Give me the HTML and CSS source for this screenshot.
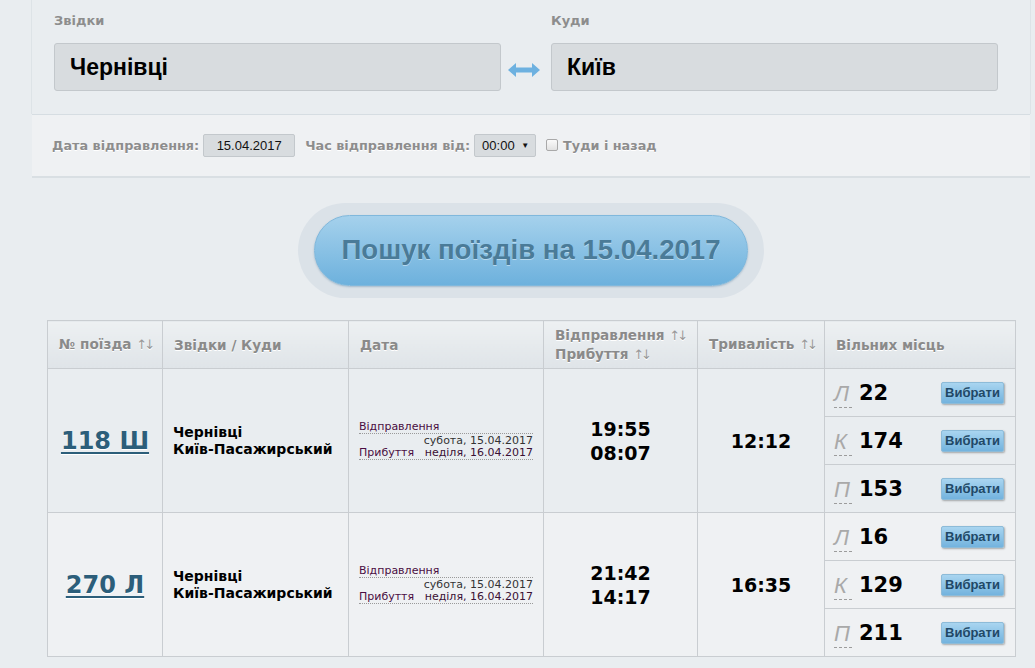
FILE: index.html
```html
<!DOCTYPE html>
<html lang="uk">
<head>
<meta charset="utf-8">
<title>Пошук поїздів</title>
<link rel="stylesheet" href="styles.css">
</head>
<body>
<div class="panel">
  <div class="route">
    <div class="field">
      <div class="label">Звідки</div>
      <div class="city-input">Чернівці</div>
    </div>
    <div class="swap">
      <svg width="32" height="14" viewBox="0 0 32 14"><path d="M0 7 L8 0 L8 4.5 L24 4.5 L24 0 L32 7 L24 14 L24 9.5 L8 9.5 L8 14 Z" fill="#6db1e0"/></svg>
    </div>
    <div class="field">
      <div class="label">Куди</div>
      <div class="city-input">Київ</div>
    </div>
  </div>
  <div class="date-row">
    <span class="dlabel">Дата відправлення:</span>
    <span class="date-box">15.04.2017</span>
    <span class="dlabel gap-l">Час відправлення від:</span>
    <span class="select-box">00:00 <span class="caret">▼</span></span>
    <span class="checkbox"></span>
    <span class="dlabel">Туди і назад</span>
  </div>
  <div class="search-wrap">
    <div class="search-ring">
      <div class="search-btn">Пошук поїздів на 15.04.2017</div>
    </div>
  </div>
  <table class="trains">
    <thead>
      <tr>
        <th class="c1">№ поїзда <span class="sort">↑↓</span></th>
        <th class="c2">Звідки / Куди</th>
        <th class="c3">Дата</th>
        <th class="c4">Відправлення <span class="sort">↑↓</span><br>Прибуття <span class="sort">↑↓</span></th>
        <th class="c5">Тривалість <span class="sort">↑↓</span></th>
        <th class="c6">Вільних місць</th>
      </tr>
    </thead>
    <tbody>
      <tr class="row-a">
        <td class="num"><a href="#">118 Ш</a></td>
        <td class="stations">Чернівці<br>Київ-Пасажирський</td>
        <td class="dates">
          <div class="dline"><span class="dl">Відправлення</span></div>
          <div class="dright">субота, 15.04.2017</div>
          <div class="dline"><span class="dl">Прибуття</span><span class="dd">неділя, 16.04.2017</span></div>
        </td>
        <td class="times">19:55<br>08:07</td>
        <td class="times">12:12</td>
        <td class="seats">
          <div class="seat"><span class="type">Л</span><span class="count">22</span><span class="pick">Вибрати</span></div>
          <div class="seat"><span class="type">К</span><span class="count">174</span><span class="pick">Вибрати</span></div>
          <div class="seat"><span class="type">П</span><span class="count">153</span><span class="pick">Вибрати</span></div>
        </td>
      </tr>
      <tr class="row-b">
        <td class="num"><a href="#">270 Л</a></td>
        <td class="stations">Чернівці<br>Київ-Пасажирський</td>
        <td class="dates">
          <div class="dline"><span class="dl">Відправлення</span></div>
          <div class="dright">субота, 15.04.2017</div>
          <div class="dline"><span class="dl">Прибуття</span><span class="dd">неділя, 16.04.2017</span></div>
        </td>
        <td class="times">21:42<br>14:17</td>
        <td class="times">16:35</td>
        <td class="seats">
          <div class="seat"><span class="type">Л</span><span class="count">16</span><span class="pick">Вибрати</span></div>
          <div class="seat"><span class="type">К</span><span class="count">129</span><span class="pick">Вибрати</span></div>
          <div class="seat"><span class="type">П</span><span class="count">211</span><span class="pick">Вибрати</span></div>
        </td>
      </tr>
    </tbody>
  </table>
</div>
</body>
</html>
```
FILE: styles.css
```css
html, body {
  margin: 0;
  padding: 0;
}
body {
  background: #e9edf0;
  font-family: "DejaVu Sans", Verdana, sans-serif;
  color: #000;
  height: 668px;
  overflow: hidden;
}
.panel {
  margin-left: 31px;
  width: 1000px;
}
.route {
  display: grid;
  grid-template-columns: 447px 50px 447px;
  padding: 13px 0 23px 22px;
  border-left: 1px solid #dde3e7;
  border-right: 1px solid #dde3e7;
}
.label {
  font-size: 13px;
  font-weight: bold;
  line-height: 16px;
  color: #8d8d8d;
  height: 16px;
  margin-bottom: 14px;
}
.city-input {
  box-sizing: border-box;
  height: 48px;
  background: #d8dcdf;
  border: 1px solid #c3c8cc;
  border-radius: 3px;
  font-family: "Liberation Sans", Arial, sans-serif;
  font-weight: bold;
  font-size: 23px;
  line-height: 46px;
  padding-left: 15px;
  color: #000;
}
.swap {
  display: flex;
  align-items: flex-end;
  justify-content: center;
  padding-bottom: 14px;
  padding-right: 4px;
}
.date-row {
  box-sizing: border-box;
  height: 64px;
  margin-left: 1px;
  width: 998px;
  background: #eff1f3;
  border-top: 1px solid #d6dde2;
  border-bottom: 2px solid #d9dfe3;
  display: flex;
  align-items: center;
  padding: 0 0 1px 20px;
}
.dlabel {
  font-size: 12.8px;
  font-weight: bold;
  color: #8d8d8d;
  text-shadow: 0 1px 0 #fff;
}
.gap-l {
  margin-left: 10px;
}
.date-box {
  box-sizing: border-box;
  margin-left: 4px;
  width: 92px;
  height: 23px;
  background: #d8dcdf;
  border: 1px solid #c3c8cc;
  border-radius: 2px;
  font-family: "Liberation Sans", Arial, sans-serif;
  font-size: 13px;
  line-height: 21px;
  text-align: center;
  color: #111;
}
.select-box {
  box-sizing: border-box;
  margin-left: 4px;
  width: 62px;
  height: 23px;
  background: #d8dcdf;
  border: 1px solid #c3c8cc;
  border-radius: 2px;
  font-family: "Liberation Sans", Arial, sans-serif;
  font-size: 13px;
  line-height: 21px;
  padding-left: 7px;
  color: #111;
}
.caret {
  font-size: 8px;
  vertical-align: 2px;
  margin-left: 3px;
}
.checkbox {
  box-sizing: border-box;
  width: 12px;
  height: 12px;
  margin: 0 5px 0 10px;
  border: 1px solid #a9a9a9;
  border-radius: 2px;
  background: linear-gradient(#fafafa, #e2e2e2);
}
.search-wrap {
  display: flex;
  justify-content: center;
  margin-top: 25px;
}
.search-ring {
  padding: 12px 16px;
  background: #dbe2e8;
  border-radius: 48px;
}
.search-btn {
  box-sizing: border-box;
  width: 434px;
  height: 71px;
  border-radius: 36px;
  border: 1px solid #80b8dc;
  background: linear-gradient(#a5d1ec, #6db1dd);
  box-shadow: 0 1px 2px rgba(60, 110, 150, 0.35);
  text-align: center;
  font-family: "Liberation Sans", Arial, sans-serif;
  font-weight: bold;
  font-size: 27.6px;
  line-height: 68px;
  color: #4a7b98;
  text-shadow: 0 1px 0 rgba(255, 255, 255, 0.45);
}
.trains {
  margin: 22px 0 0 16px;
  width: 968px;
  border-collapse: collapse;
  table-layout: fixed;
}
.trains th,
.trains td {
  border: 1px solid #c9cdd1;
}
.trains th {
  height: 47px;
  padding: 0 0 0 11px;
  background: linear-gradient(#edf0f2, #dfe4e8);
  font-size: 13.6px;
  font-weight: bold;
  color: #8a8a8a;
  text-align: left;
  line-height: 18px;
  white-space: nowrap;
  text-shadow: 0 1px 0 #fff;
}
.sort {
  font-weight: normal;
  font-size: 13px;
  letter-spacing: -3px;
  color: #999;
}
.c1 { width: 103px; }
.c2 { width: 174px; }
.c3 { width: 183px; }
.c4 { width: 142px; }
.c5 { width: 115px; }
.c6 { width: 179px; }
.row-a td { background: #e9edf0; }
.row-b td { background: #eff1f3; }
.trains td {
  height: 143px;
  padding: 0;
  vertical-align: middle;
}
.num {
  text-align: center;
}
.num a {
  font-size: 24px;
  font-weight: bold;
  color: #2c5e7a;
  text-decoration: underline;
  text-underline-offset: 3px;
  text-decoration-thickness: 2px;
  text-shadow: 0 1px 0 #fff;
}
.stations {
  padding-left: 10px !important;
  font-size: 14px;
  font-weight: bold;
  line-height: 17px;
}
.dates {
  padding: 0 10px 0 10px !important;
  font-size: 11px;
  line-height: 12px;
  color: #333;
}
.dline {
  display: flex;
  justify-content: space-between;
  border-bottom: 1px dotted #9a9a9a;
}
.dright {
  text-align: right;
  padding-top: 1px;
}
.dl {
  color: #4a0d42;
}
.dd {
  color: #3a1034;
}
.times {
  text-align: center;
  font-size: 19px;
  font-weight: bold;
  line-height: 24px;
}
.seats {
  vertical-align: top !important;
}
.seat {
  height: 47px;
  display: flex;
  align-items: center;
  padding: 0 11px 0 9px;
  border-bottom: 1px solid #c9cdd1;
}
.seat:last-child {
  border-bottom: none;
}
.type {
  font-family: "Liberation Sans", Arial, sans-serif;
  font-style: italic;
  font-size: 22px;
  line-height: 22px;
  color: #a9a9a9;
  width: 18px;
  border-bottom: 1px dashed #9c9c9c;
  padding-bottom: 2px;
  margin-top: 6px;
}
.count {
  margin-left: 7px;
  font-size: 21px;
  font-weight: bold;
  flex: 1;
}
.pick {
  box-sizing: border-box;
  width: 63px;
  height: 22px;
  border: 1px solid #8dbbd8;
  border-radius: 2px;
  background: linear-gradient(#a9d5f0, #73b3de);
  box-shadow: 1px 1px 2px rgba(0, 0, 0, 0.3);
  font-family: "Liberation Sans", Arial, sans-serif;
  font-weight: bold;
  font-size: 13px;
  line-height: 20px;
  text-align: center;
  color: #1f4866;
}
```
